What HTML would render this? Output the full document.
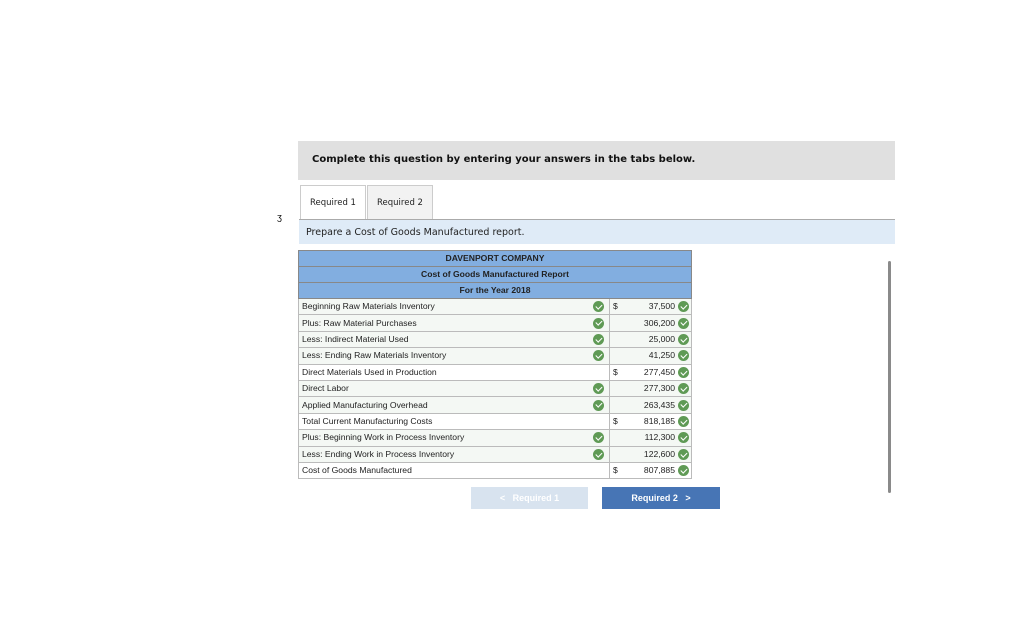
<!DOCTYPE html>
<html><head><style>
body{margin:0;width:1024px;height:640px;background:#fff;position:relative;font-family:"Liberation Sans",Arial,sans-serif;overflow:hidden}
.a{position:absolute}
.top{left:298px;top:141px;width:597px;height:39px;background:#e0e0e0;font-family:"DejaVu Sans",sans-serif;font-weight:bold;font-size:10px;line-height:34px;padding-top:2px;padding-left:14px;box-sizing:border-box;color:#111}
.tab{top:185px;height:34px;font-family:"DejaVu Sans",sans-serif;font-size:8.5px;line-height:35px;text-align:center;box-sizing:border-box;border:1px solid #ccc;border-bottom:none;color:#222}
.prep{left:299px;top:220px;width:596px;height:24px;background:#dfebf7;font-family:"DejaVu Sans",sans-serif;font-size:9.5px;line-height:26px;padding-left:7px;box-sizing:border-box;color:#222}
table{position:absolute;left:298px;top:250px;border-collapse:collapse;width:394px;font-size:8.6px;color:#222;line-height:11px}
td{height:15.4px;padding:0 3px;border:1px solid #bbb;white-space:nowrap;box-sizing:border-box}
tr.r{height:16.4px}
tr.h{height:16px}
th{background:#82aee0;border:1px solid #888;font-weight:bold;font-size:8.6px;color:#222;padding:0}
tr.g td.l,tr.g td.v{background:#f4f8f4}
.ck{display:inline-block;width:11px;height:11px;border-radius:50%;background:#5f9a55;vertical-align:top;position:relative}
.ck:after{content:"";position:absolute;left:3.5px;top:1.8px;width:2.5px;height:5px;border:solid #fff;border-width:0 1.5px 1.5px 0;transform:rotate(45deg)}
.l{width:311px}
.l .ck{float:right;margin-right:2px}
.v{text-align:right;padding-right:2px}
.v .ck{margin-left:3px}
.d{float:left}
</style></head><body>
<div class="a" style="left:277px;top:212px;font-size:9px">ʒ</div>
<div class="a top">Complete this question by entering your answers in the tabs below.</div>
<div class="a tab" style="left:300px;width:66px;background:#fff">Required 1</div>
<div class="a tab" style="left:367px;width:66px;background:#f2f2f2">Required 2</div>
<div class="a" style="left:299px;top:219px;width:596px;height:1px;background:#aaa"></div>
<div class="a prep">Prepare a Cost of Goods Manufactured report.</div>
<table>
<tr class="h"><th colspan="2">DAVENPORT COMPANY</th></tr>
<tr class="h"><th colspan="2">Cost of Goods Manufactured Report</th></tr>
<tr class="h"><th colspan="2">For the Year 2018</th></tr>
<tr class="r g"><td class="l">Beginning Raw Materials Inventory<span class="ck"></span></td><td class="v"><span class="d">$</span>37,500<span class="ck"></span></td></tr>
<tr class="r g"><td class="l">Plus: Raw Material Purchases<span class="ck"></span></td><td class="v">306,200<span class="ck"></span></td></tr>
<tr class="r g"><td class="l">Less: Indirect Material Used<span class="ck"></span></td><td class="v">25,000<span class="ck"></span></td></tr>
<tr class="r g"><td class="l">Less: Ending Raw Materials Inventory<span class="ck"></span></td><td class="v">41,250<span class="ck"></span></td></tr>
<tr class="r"><td class="l">Direct Materials Used in Production</td><td class="v"><span class="d">$</span>277,450<span class="ck"></span></td></tr>
<tr class="r g"><td class="l">Direct Labor<span class="ck"></span></td><td class="v">277,300<span class="ck"></span></td></tr>
<tr class="r g"><td class="l">Applied Manufacturing Overhead<span class="ck"></span></td><td class="v">263,435<span class="ck"></span></td></tr>
<tr class="r"><td class="l">Total Current Manufacturing Costs</td><td class="v"><span class="d">$</span>818,185<span class="ck"></span></td></tr>
<tr class="r g"><td class="l">Plus: Beginning Work in Process Inventory<span class="ck"></span></td><td class="v">112,300<span class="ck"></span></td></tr>
<tr class="r g"><td class="l">Less: Ending Work in Process Inventory<span class="ck"></span></td><td class="v">122,600<span class="ck"></span></td></tr>
<tr class="r"><td class="l">Cost of Goods Manufactured</td><td class="v"><span class="d">$</span>807,885<span class="ck"></span></td></tr>
</table>
<div class="a" style="left:471px;top:487px;width:117px;height:22px;background:#d8e3ef;color:#fff;font-weight:bold;font-size:9px;line-height:22px;text-align:center">&lt;&nbsp;&nbsp; Required 1</div>
<div class="a" style="left:602px;top:487px;width:118px;height:22px;background:#4775b5;color:#fff;font-weight:bold;font-size:9px;line-height:22px;text-align:center">Required 2 &nbsp;&nbsp;&gt;</div>
<div class="a" style="left:888px;top:261px;width:3px;height:232px;background:#8a8a8a;border-radius:2px"></div>
</body></html>
